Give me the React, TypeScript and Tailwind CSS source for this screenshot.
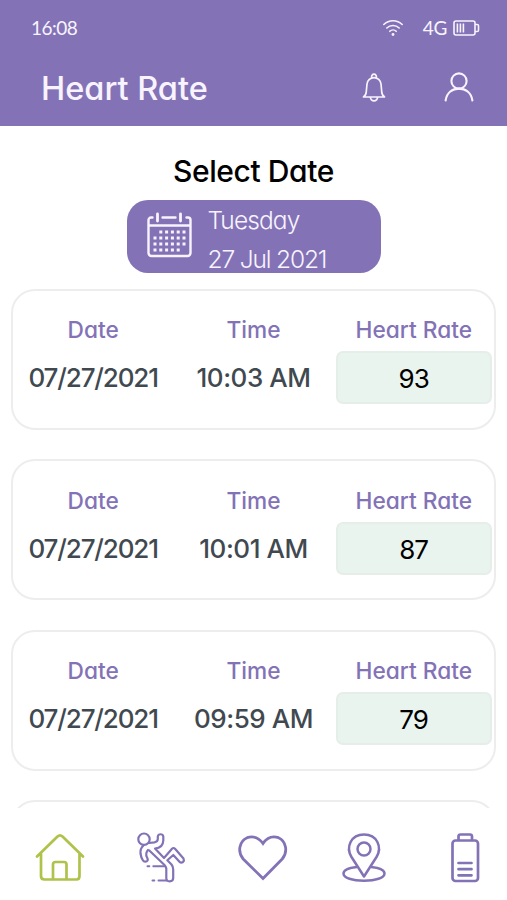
import type { ReactNode } from 'react'

interface Reading {
  date: string
  time: string
  rate: number
}

const readings: Reading[] = [
  { date: '07/27/2021', time: '10:03 AM', rate: 93 },
  { date: '07/27/2021', time: '10:01 AM', rate: 87 },
  { date: '07/27/2021', time: '09:59 AM', rate: 79 },
]

export default function App() {
  return (
    <div className="flex h-[900px] w-[507px] flex-col overflow-hidden bg-white font-['Inter',sans-serif] [font-feature-settings:'cv11']">
      <Header />
      <main className="flex h-[682px] flex-col overflow-hidden">
        <h2 className="mt-[27px] text-center text-[30px] leading-9 font-medium tracking-[-0.4px] text-black">
          Select Date
        </h2>
        <DateButton />
        <div className="mt-[15.5px] flex flex-col gap-[29.5px] px-[11px]">
          {readings.map((reading) => (
            <ReadingCard key={reading.time} reading={reading} />
          ))}
          <div className="h-[141px] shrink-0 rounded-[24px] border-2 border-[#ededed]" />
        </div>
      </main>
      <BottomNav />
    </div>
  )
}

function Header() {
  return (
    <header className="h-[126px] shrink-0 bg-[#8373b6] text-[#f8f3fe]">
      <div className="flex h-[55px] items-center pr-[27px] pl-[31px] font-['Lato',sans-serif]">
        <span className="text-[19px] leading-6 tracking-[-0.5px]">16:08</span>
        <svg className="ml-auto" width="22" height="18" viewBox="0 0 22 18" fill="none" stroke="currentColor" strokeWidth="1.6" strokeLinecap="round">
          <path d="M1.8 5.5a13 13 0 0 1 18.4 0M4.8 9a8.8 8.8 0 0 1 12.4 0M7.8 12.3a4.6 4.6 0 0 1 6.4 0" />
          <circle cx="11" cy="15.5" r="1.4" fill="currentColor" stroke="none" />
        </svg>
        <span className="ml-[19px] text-[19px] leading-6 tracking-[-0.3px]">4G</span>
        <svg className="ml-[6px]" width="27" height="16" viewBox="0 0 27 16" fill="none" stroke="currentColor" strokeWidth="1.6">
          <rect x="1" y="1" width="21" height="14" rx="2" />
          <path d="M22 4.5h2.2q1.3 0 1.3 1.3v4.4q0 1.3-1.3 1.3H22M4.4 3.5v9M7.4 3.5v9M10.4 3.5v9" />
        </svg>
      </div>
      <div className="flex h-[66px] items-center pr-[32px] pl-[41px]">
        <h1 className="mt-px text-[32.5px] leading-10 font-medium">Heart Rate</h1>
        <svg className="mb-[3px] ml-auto" width="24" height="30" viewBox="0 0 24 30" fill="none" stroke="currentColor" strokeWidth="1.7" strokeLinejoin="round" strokeLinecap="round">
          <path d="M9.7 5.3A2.4 2.4 0 1 1 14.3 5.3M1.5 25c2-1.5 2.8-3 2.8-5.5L5 12a7.05 7.3 0 0 1 14 0l.7 7.5c0 2.5.8 4 2.8 5.5zM8.5 25.5a3.5 3.3 0 0 0 7 0" />
        </svg>
        <svg className="mb-[2px] ml-[57px]" width="32" height="32" viewBox="0 0 32 32" fill="none" stroke="currentColor" strokeWidth="2.1" strokeLinecap="round">
          <circle cx="16" cy="10" r="7.6" />
          <path d="M2.6 29.5C3.8 21.5 9.5 17.6 16 17.6S28.2 21.5 29.4 29.5" />
        </svg>
      </div>
    </header>
  )
}

function DateButton() {
  return (
    <button className="mt-[11px] flex h-[73px] w-[254px] shrink-0 items-start self-center rounded-[21px] bg-[#8373b6] pl-[20px] text-left text-[#f8f3fe]">
      <CalendarIcon />
      <span className="mt-px ml-[16px] flex flex-col text-[24.5px] leading-[38.5px] font-[350]">
        <span className="tracking-[-0.9px]">Tuesday</span>
        <span className="tracking-[-1.15px]">27 Jul 2021</span>
      </span>
    </button>
  )
}

function CalendarIcon() {
  return (
    <svg className="mt-[12px] shrink-0" width="45" height="46" viewBox="0 0 45 46" fill="none" stroke="currentColor" strokeWidth="2.4" strokeLinecap="round">
      <path d="M5.5 5.5H4A2.5 2.5 0 0 0 1.5 8v33A3 3 0 0 0 4.5 44h36a3 3 0 0 0 3-3V8A2.5 2.5 0 0 0 41 5.5h-1.5M15.5 5.5h13M1.5 13.5h42" />
      <path d="M10.5 2v7M33.5 2v7" strokeWidth="2.8" />
      {[20, 26, 32, 38].map((y, row) =>
        [8, 13.8, 19.6, 25.4, 31.2, 37].map((x, col) =>
          (row === 0 && col === 0) || (row === 3 && col === 5) ? null : (
            <rect key={`${x}-${y}`} x={x - 1.5} y={y - 1.5} width="3" height="3" fill="currentColor" stroke="none" />
          ),
        ),
      )}
    </svg>
  )
}

function ReadingCard({ reading }: { reading: Reading }) {
  return (
    <article className="grid h-[141px] shrink-0 grid-cols-3 rounded-[24px] border-2 border-[#ededed] pt-[25.5px] text-center">
      <Column label="Date">
        <p className="mt-[18px] text-[26px] leading-8 font-medium tracking-[-1.15px] text-[#414950]">{reading.date}</p>
      </Column>
      <Column label="Time">
        <p className="mt-[18px] text-[26px] leading-8 font-medium tracking-[-0.45px] text-[#414950]">{reading.time}</p>
      </Column>
      <Column label="Heart Rate">
        <p className="mt-[7px] ml-[2px] h-[53px] w-[156px] rounded-[7px] border-2 border-[#e6eeea] bg-[#eaf4ef] text-[26px] leading-[51px] tracking-[-1px] text-black">
          {reading.rate}
        </p>
      </Column>
    </article>
  )
}

function Column({ label, children }: { label: string; children: ReactNode }) {
  return (
    <div className="min-w-0 whitespace-nowrap">
      <h3 className="text-[22.7px] leading-7 font-medium text-[#8373b6]">{label}</h3>
      {children}
    </div>
  )
}

function BottomNav() {
  return (
    <nav className="flex flex-1 items-start justify-between bg-white pt-[23px] pr-[15px] pl-[33px] text-[#8373b6]">
      <svg width="54" height="54" viewBox="0 0 54 54" fill="none" stroke="#afc34b" strokeWidth="2.7" strokeLinecap="round" strokeLinejoin="round">
        <path d="M4 25.5 24.5 5.5q2.5-2.3 5 0L50 25.5M8 22.5v22.5Q8 48.5 11.5 48.5h32q3 0 3-3.5V22.5" />
        <path d="M20 48V33.500Q20 31 22.500 31h8.500q2.500 0 2.500 2.500V48" />
      </svg>
      <svg width="54" height="54" viewBox="0 0 54 54" fill="none" stroke="currentColor" strokeWidth="2.2" strokeLinecap="round" strokeLinejoin="round">
        <circle cx="10" cy="8.2" r="5.7" />
        <path d="M15 12 20.5 11.3Q23.7 10.8 23.8 8V5.500a2.8 2.8 0 0 1 5.5 0V9.500Q29 17 21 17.500L30 27 38 17.800Q39.500 16.200 41 17.800L49.500 27.500Q50.500 29.500 49 31 47.200 32.200 45.500 30.800L39.300 24 33.300 29.300 37.500 33.500Q39.200 35.500 39.200 38.500V47Q39.200 50.300 35.700 50.300T32.300 47V37.500Q32 35.500 30.500 34L15.300 19.500" />
        <path d="M9.500 14.500Q6 17.500 6.500 22.500 7 26.500 9 29.500 11 31.500 13 30.200 14.500 29 13 26.300 11 22.500 14 19" />
        <path d="M13.500 35.300h1.800M19.300 35.300h11.500M18.500 49.500h1.800M24.500 49.500h8.500" strokeWidth="2" />
      </svg>
      <svg width="54" height="54" viewBox="0 0 54 54" fill="none" stroke="currentColor" strokeWidth="2.8" strokeLinejoin="miter">
        <path d="M27 47.500 7.200 28C1.200 21 3.200 10 11.200 6.700c6-2 11.500 0 15.800 5.800 4-5.800 9.500-7.800 15.500-5.800C50.200 10 52.200 21 46.200 28z" />
      </svg>
      <svg width="54" height="54" viewBox="0 0 54 54" fill="none" stroke="currentColor" strokeWidth="2.5" strokeLinejoin="round">
        <path d="M27 45.500 14.500 26C8.500 16 14 3.500 27 3.500S45.500 16 39.500 26z" />
        <circle cx="27" cy="18" r="6.500" />
        <path d="M20 36c-8 .8-13.500 3-13.500 6.500 0 4.500 9 7.200 20.500 7.200s20.500-2.700 20.500-7.200c0-3.500-5.500-5.700-13.500-6.500" />
      </svg>
      <svg width="54" height="54" viewBox="0 0 54 54" fill="none" stroke="currentColor" strokeWidth="2.7" strokeLinecap="round" strokeLinejoin="round">
        <rect x="14.500" y="9.500" width="25.500" height="40.500" rx="3" />
        <path d="M20.500 9V5.500q0-2 2-2h9.500q2 0 2 2v3.500M20.500 32h13M20.500 38.200h13M20.500 44.300h13" />
      </svg>
    </nav>
  )
}
